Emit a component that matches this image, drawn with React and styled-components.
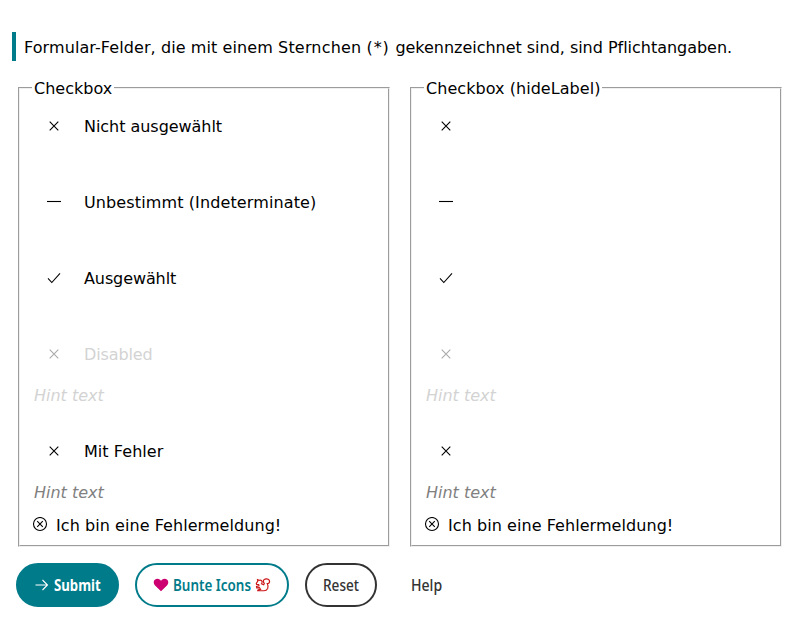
import React from "react";
import styled, { createGlobalStyle } from "styled-components";

const Global = createGlobalStyle`
  * { box-sizing: border-box; }
  body { margin: 0; background: #fff; color: #000; font: 16px/20px Verdana, "DejaVu Sans", sans-serif; }
`;
const Page = styled.main`
  width: 800px;
  padding: 32px 16px 0 12px;
`;
const Notice = styled.p`
  margin: 0;
  height: 29px;
  padding-left: 8px;
  border-left: 4px solid #007b8a;
  line-height: 30px;
  white-space: nowrap;
`;
const Columns = styled.div`
  display: grid;
  grid-template-columns: 1fr 1fr;
  gap: 16px;
  margin: 17px 0 0 4px;
`;
const Fieldset = styled.fieldset`
  height: 469px;
  margin: 0 2px;
  padding: 6px 12px 0;
  border: 2px groove rgb(240, 240, 240);
  min-width: 0;
`;
const Legend = styled.legend`
  padding: 0 2px;
  height: 20px;
`;
const Field = styled.div`
  display: flex;
  flex-direction: column;
  margin-bottom: ${(p) => p.$gap || 32}px;
  color: ${(p) => (p.$disabled ? "#d3d3d3" : "#000")};
`;
const Row = styled.label`
  display: flex;
  align-items: center;
  height: 44px;
  padding-left: 14px;
  gap: 22px;
`;
const Mark = styled.svg`
  width: 16px;
  height: 16px;
  flex: none;
  fill: none;
  stroke: ${(p) => p.$color || "#000"};
  stroke-width: ${(p) => p.$stroke || 1.1};
`;
const Hint = styled.span`
  margin: 10px 0 0 2px;
  line-height: 20px;
  font-style: italic;
  color: ${(p) => (p.$disabled ? "#d3d3d3" : "#808080")};
`;
const ErrorText = styled.div`
  display: flex;
  align-items: center;
  gap: 8px;
  height: 20px;
  margin-top: 12px;
`;
const T = styled.span`
  display: block;
  white-space: nowrap;
  letter-spacing: ${(p) => p.$ls || 0}px;
  transform: translateY(1px);
`;
const Spaced = styled.span`
  letter-spacing: ${(p) => p.$ls}px;
`;
const Actions = styled.div`
  display: flex;
  gap: 16px;
  margin: 16px 0 0 4px;
`;
const Button = styled.button`
  display: flex;
  align-items: center;
  justify-content: center;
  gap: 4px;
  width: ${(p) => p.$w}px;
  height: 44px;
  padding: 0;
  border: 2px solid ${(p) => p.$border || "transparent"};
  border-radius: 22px;
  background: ${(p) => p.$bg || "transparent"};
  color: ${(p) => p.$color};
  font: ${(p) => p.$weight || 500} 16px/20px "Noto Sans", sans-serif;
`;
const Caption = styled.span`
  width: ${(p) => p.$w}px;
  white-space: nowrap;
  text-align: left;
  transform: scaleX(${(p) => p.$scale || 0.85});
  transform-origin: left center;
`;

const paths = {
  cross: "M3.7 3.7l8.6 8.6M12.3 3.7l-8.6 8.6",
  dash: "M1 7.5h14",
  check: "M2 8.3l3.8 4.2L14 3.3",
};
const Icon = ({ kind, disabled }) => (
  <Mark viewBox="0 0 16 16" $color={disabled ? "#aaa" : "#000"}>
    <path d={paths[kind]} />
  </Mark>
);

const fields = [
  { kind: "cross", label: "Nicht ausgewählt", ls: -0.04 },
  { kind: "dash", label: "Unbestimmt (Indeterminate)", ls: 0.12 },
  { kind: "check", label: "Ausgewählt", ls: -0.1 },
  { kind: "cross", label: "Disabled", ls: -0.12, disabled: true, hint: true, gap: 23 },
  { kind: "cross", label: "Mit Fehler", ls: 0.06, hint: true, error: true },
];

const Group = ({ title, ls, hideLabel }) => (
  <Fieldset>
    <Legend><T $ls={ls}>{title}</T></Legend>
    {fields.map((f) => (
      <Field key={f.label} $gap={f.gap} $disabled={f.disabled}>
        <Row>
          <Icon kind={f.kind} disabled={f.disabled} />
          {!hideLabel && <T $ls={f.ls}>{f.label}</T>}
        </Row>
        {f.hint && <Hint $disabled={f.disabled}>Hint text</Hint>}
        {f.error && (
          <ErrorText>
            <Mark viewBox="0 0 16 16">
              <circle cx="8" cy="7" r="6.5" />
              <path d="M5.2 4.2l5.6 5.6M10.8 4.2l-5.6 5.6" />
            </Mark>
            <T $ls={0.06}>Ich bin eine Fehlermeldung!</T>
          </ErrorText>
        )}
      </Field>
    ))}
  </Fieldset>
);

export default function App() {
  return (
    <>
      <Global />
      <Page>
        <Notice>
          <T>
            <Spaced $ls={0.09}>Formular-Felder, die mit einem </Spaced>
            <Spaced $ls={0.18}>Sternchen </Spaced>
            <Spaced $ls={0.8}>(*) </Spaced>
            <Spaced $ls={-0.025}>gekennzeichnet sind, sind Pflichtangaben.</Spaced>
          </T>
        </Notice>
        <Columns>
          <Group title="Checkbox" />
          <Group title="Checkbox (hideLabel)" ls={0.05} hideLabel />
        </Columns>
        <Actions>
          <Button $w={103} $border="#007b8a" $bg="#007b8a" $color="#fff" $weight={700}>
            <Mark viewBox="0 0 16 16" $color="#fff"><path d="M1.5 8h12M8.5 3l5 5-5 5" /></Mark>
            <Caption $w={47} $scale={0.825}>Submit</Caption>
          </Button>
          <Button $w={154} $border="#007b8a" $color="#007b8a" $weight={600}>
            <Mark viewBox="0 0 16 16" $color="none">
              <path fill="#cc0070" d="M8 14.3L1.8 8.3C-.7 4.5 1.5 1.8 4.5 1.8C6.3 1.9 7.3 2.7 8 4C8.7 2.7 9.7 1.9 11.5 1.8C14.500 1.8 16.700 4.5 14.200 8.3Z" />
            </Mark>
            <Caption $w={78} $scale={0.84}>Bunte Icons</Caption>
            <Mark viewBox="0 0 16 16" $color="#cc1719" $stroke={1.15}>
              <path d="M1.300 6.300L2.800 4.200L2.500 2.600L4.400 3.300Q6.500 2.700 7 4.300Q7.300 6 6.500 6.800L8.700 7.800L9.300 6.500Q7.500 4 9 2.600Q10.700 1.300 12.700 2.100Q15 3.200 14.500 5.300Q14 6.800 12.300 6.600Q13.500 9 12.700 11.500Q11.500 13.700 9 13.700H2.700Q2.800 12.300 5.500 12.300L4.500 10.700L1.700 10.800L1.500 9.500L4 8.800L3.700 7.500L1.600 7.400Z" />
            </Mark>
          </Button>
          <Button $w={72} $border="#333" $color="#333"><Caption $w={36}>Reset</Caption></Button>
          <Button $w={67} $color="#333"><Caption $w={32} $scale={0.88}>Help</Caption></Button>
        </Actions>
      </Page>
    </>
  );
}
